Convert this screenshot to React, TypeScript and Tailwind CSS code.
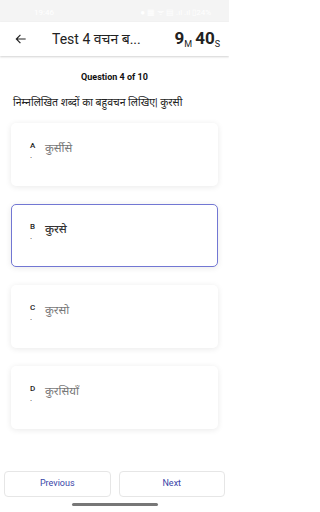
import React, { useState } from 'react';

interface Option {
  key: string;
  text: string;
}

const options: Option[] = [
  { key: 'A', text: 'कुर्सीसे' },
  { key: 'B', text: 'कुरसे' },
  { key: 'C', text: 'कुरसो' },
  { key: 'D', text: 'कुरसियाँ' },
];

const font = { fontFamily: 'Roboto, "Noto Sans", sans-serif' };

const App: React.FC = () => {
  const [selected, setSelected] = useState('B');

  return (
    <div className="flex h-[512px] w-[229px] flex-col overflow-hidden bg-white" style={font}>
      {/* status bar */}
      <div className="flex h-[22px] items-center justify-between bg-[#f4f4f4] px-[34px] pr-[18px] text-[8px] text-white">
        <span className="pt-[4px]">19:46</span>
        <span className="pt-[4px]">● ▦ ᯤ ▤ .ıl .ıl ▯24%</span>
      </div>

      {/* header */}
      <div className="relative z-10 flex h-[34px] items-center bg-white shadow-[0_1px_2px_rgba(0,0,0,0.18)]">
        <button className="ml-[13px] flex h-[16px] w-[16px] items-center justify-center text-[#222]">
          <svg width="14" height="14" viewBox="0 0 24 24" fill="none" stroke="currentColor" strokeWidth="2">
            <path d="M20 12H4M11 5l-7 7 7 7" />
          </svg>
        </button>
        <span className="ml-[23px] text-[14px] text-[#222]">Test 4 वचन ब...</span>
        <div className="ml-auto mr-[9px] flex items-baseline font-bold text-[#222]">
          <span className="text-[17px]">9</span>
          <span className="relative top-[3px] text-[9px] font-normal">M</span>
          <span className="ml-[3px] text-[17px]">40</span>
          <span className="relative top-[3px] text-[9px] font-normal">S</span>
        </div>
      </div>

      {/* question */}
      <div className="mt-[15px] text-center text-[9px] font-bold text-[#111]">Question 4 of 10</div>
      <div className="mt-[10px] px-[13px] text-[10.5px] text-[#222]">निम्नलिखित शब्दों का बहुवचन लिखिए| कुरसी</div>

      {/* options */}
      <div className="mt-[13px] flex flex-col gap-[18px] px-[11px]">
        {options.map((o) => {
          const active = selected === o.key;
          return (
            <div
              key={o.key}
              onClick={() => setSelected(o.key)}
              className={`h-[63px] cursor-pointer rounded-[5px] bg-white shadow-[0_1px_6px_rgba(0,0,0,0.09)] ${
                active ? 'border border-[#7277d3]' : 'border border-transparent'
              }`}
            >
              <div className="flex pl-[18px] pt-[17px]">
                <div className="flex w-[15px] flex-col">
                  <span className="text-[8px] font-medium leading-[10px] text-[#222]">{o.key}</span>
                  <span className="mt-[2px] text-[8px] leading-[6px] text-[#222]">.</span>
                </div>
                <span className={`text-[11.5px] leading-[14px] ${active ? 'font-medium text-[#333]' : 'text-[#777]'}`}>
                  {o.text}
                </span>
              </div>
            </div>
          );
        })}
      </div>

      <div className="flex-1" />

      {/* footer buttons */}
      <div className="flex gap-[8px] px-[4px]">
        <button className="h-[26px] flex-1 rounded-[4px] border border-[#e6e6e6] bg-white text-[9px] text-[#3a45a8]">
          Previous
        </button>
        <button className="h-[26px] flex-1 rounded-[4px] border border-[#e6e6e6] bg-white text-[9px] text-[#3a45a8]">
          Next
        </button>
      </div>
      <div className="flex h-[15px] items-center justify-center">
        <div className="h-[3px] w-[86px] rounded-full bg-[#777]" />
      </div>
    </div>
  );
};

export default App;
